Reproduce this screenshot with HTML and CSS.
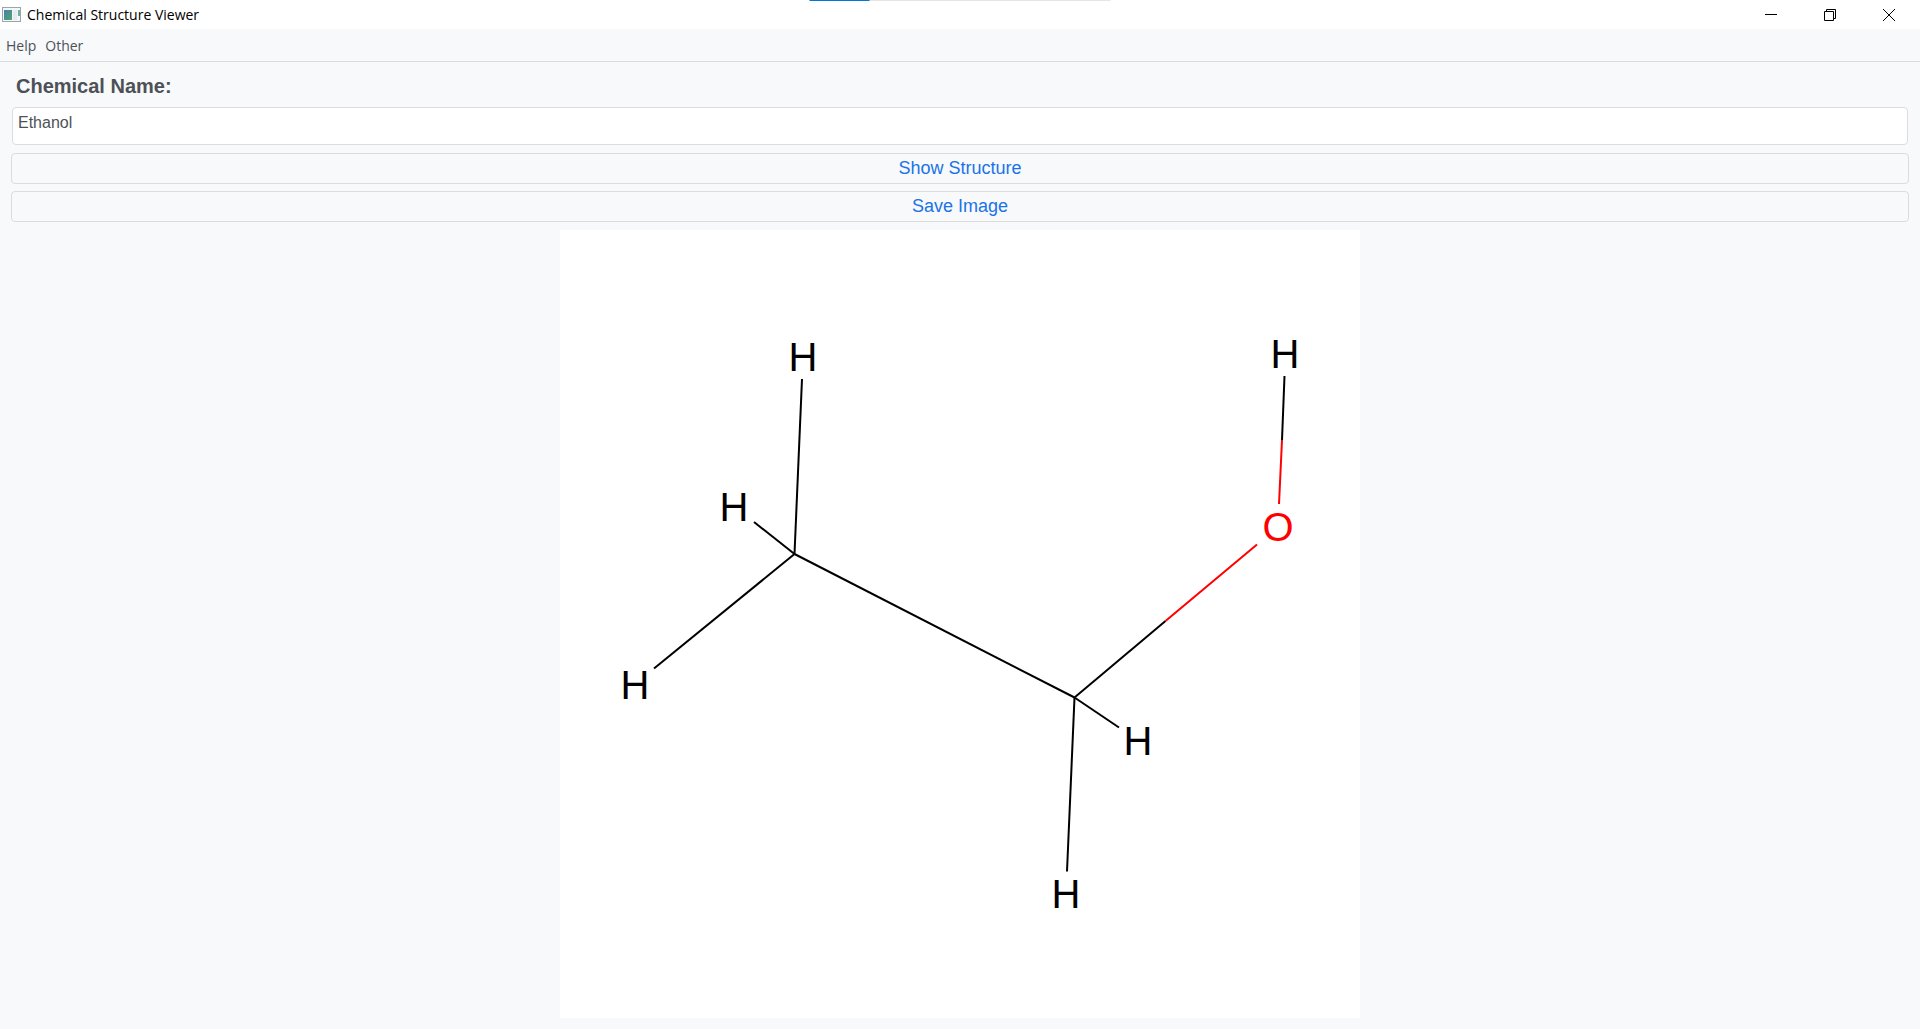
FILE: index.html
```html
<!DOCTYPE html>
<html lang="en">
<head>
  <meta charset="UTF-8">
  <meta name="viewport" content="width=device-width, initial-scale=1.0">
  <title>Chemical Structure Viewer</title>
  <link rel="stylesheet" href="styles.css">
</head>
<body>
  <header class="title-bar">
    <svg class="app-icon" width="20" height="16" viewBox="0 0 20 16" aria-hidden="true">
      <defs>
        <linearGradient id="pane" x1="0" y1="0" x2="1" y2="1">
          <stop offset="0" stop-color="#4a7fa8"/>
          <stop offset="1" stop-color="#4fa572"/>
        </linearGradient>
      </defs>
      <rect x="0.5" y="0.5" width="18" height="14" fill="#f4f7f8" stroke="#9aa5ad"/>
      <rect x="2" y="3" width="8" height="10" fill="url(#pane)"/>
      <rect x="11" y="3" width="4" height="10" fill="#e6ecee"/>
      <rect x="16" y="3" width="2" height="6" fill="#6fb0a0"/>
    </svg>
    <h1 class="window-title">Chemical Structure Viewer</h1>
    <div class="top-progress"><div class="top-progress-fill"></div></div>
    <div class="window-controls">
      <button type="button" aria-label="Minimize">
        <svg width="12" height="12" viewBox="0 0 12 12"><path d="M0 5.5H12"/></svg>
      </button>
      <button type="button" aria-label="Restore">
        <svg width="12" height="12" viewBox="0 0 12 12"><path d="M0.5 2.5H9.5V11.5H0.5ZM2.5 2.5V0.5H11.5V9.5H9.5"/></svg>
      </button>
      <button type="button" aria-label="Close">
        <svg width="12" height="12" viewBox="0 0 12 12"><path d="M0 0L12 12M12 0L0 12"/></svg>
      </button>
    </div>
  </header>

  <nav class="menu-bar">
    <button type="button">Help</button>
    <button type="button">Other</button>
  </nav>

  <main class="content">
    <label for="chemicalName">Chemical Name:</label>
    <textarea id="chemicalName" rows="1" spellcheck="false">Ethanol</textarea>
    <button type="button" class="btn">Show Structure</button>
    <button type="button" class="btn">Save Image</button>

    <!-- Ethanol with explicit hydrogens -->
    <svg class="structure" viewBox="0 0 800 788" role="img" aria-label="Structure of ethanol">
      <g class="bonds">
        <path d="M234.5 324L242 149"/>
        <path d="M234.5 324L194 292"/>
        <path d="M234.5 324L94 438.5"/>
        <path d="M234.5 324L514.5 467.5"/>
        <path d="M514.5 467.5L559 497.5"/>
        <path d="M514.5 467.5L507 641.5"/>
        <path d="M514.5 467.5L605.5 391"/>
        <path d="M724.5 146L722 210"/>
        <path class="oxygen-bond" d="M605.5 391L697 314.5"/>
        <path class="oxygen-bond" d="M722 210L719 274"/>
      </g>
      <g class="atoms">
        <text x="243" y="141">H</text>
        <text x="174" y="291">H</text>
        <text x="75" y="469">H</text>
        <text x="578" y="525">H</text>
        <text x="506" y="678">H</text>
        <text x="725" y="138">H</text>
        <text class="oxygen" x="718" y="311">O</text>
      </g>
    </svg>
  </main>
</body>
</html>
```

FILE: styles.css
```css
* { margin: 0; padding: 0; box-sizing: border-box; }

body {
  font-family: "Liberation Sans", Arial, sans-serif;
  background: #f8f9fb;
  color: #4d5157;
  min-height: 100vh;
}

button {
  border: none;
  background: none;
  font: inherit;
  color: inherit;
}

/* Title bar */
.title-bar {
  position: relative;
  display: flex;
  align-items: center;
  height: 29px;
  padding: 0 2px;
  background: #fff;
}

.window-title {
  margin-left: 5px;
  font-family: "Segoe UI", "Open Sans", sans-serif;
  font-size: 14px;
  font-weight: 400;
  color: #000;
}

.top-progress {
  position: absolute;
  top: 0;
  left: 50%;
  width: 301px;
  height: 1px;
  transform: translateX(-50%);
  background: #e5e5e5;
}

.top-progress-fill {
  width: 20%;
  height: 100%;
  background: #0078d7;
}

.window-controls {
  display: flex;
  margin-left: auto;
}

.window-controls button {
  display: flex;
  align-items: center;
  justify-content: center;
  width: 59px;
  height: 28px;
}

.window-controls svg {
  fill: none;
  stroke: #000;
}

/* Menu */
.menu-bar {
  display: flex;
  gap: 9px;
  height: 33px;
  padding: 0 6px;
  border-bottom: 1px solid #dadce0;
  font-family: "Segoe UI", "Open Sans", sans-serif;
  font-size: 14px;
}

/* Form */
.content {
  display: flex;
  flex-direction: column;
  gap: 7px;
  padding: 11px;
}

label {
  padding: 0 5px;
  font-size: 20px;
  font-weight: 700;
  line-height: 27px;
}

textarea {
  display: block;
  height: 38px;
  margin: 0 1px 1px;
  padding: 5px;
  border: 1px solid #dadce0;
  border-radius: 4px;
  background: #fff;
  color: inherit;
  font: inherit;
  font-size: 16px;
  line-height: 20px;
  resize: none;
  overflow: hidden;
  outline: none;
}

.btn {
  height: 31px;
  border: 1px solid #dadce0;
  border-radius: 4px;
  color: #1a73e8;
  font-size: 18px;
}

/* Molecule */
.structure {
  align-self: center;
  width: 100%;
  max-width: 800px;
  margin-top: 1px;
  background: #fff;
}

.bonds {
  fill: none;
  stroke: #000;
  stroke-width: 2;
}

.oxygen-bond { stroke: #f00; }

.atoms {
  font-size: 40px;
  text-anchor: middle;
  fill: #000;
}

.oxygen { fill: #f00; }
```
